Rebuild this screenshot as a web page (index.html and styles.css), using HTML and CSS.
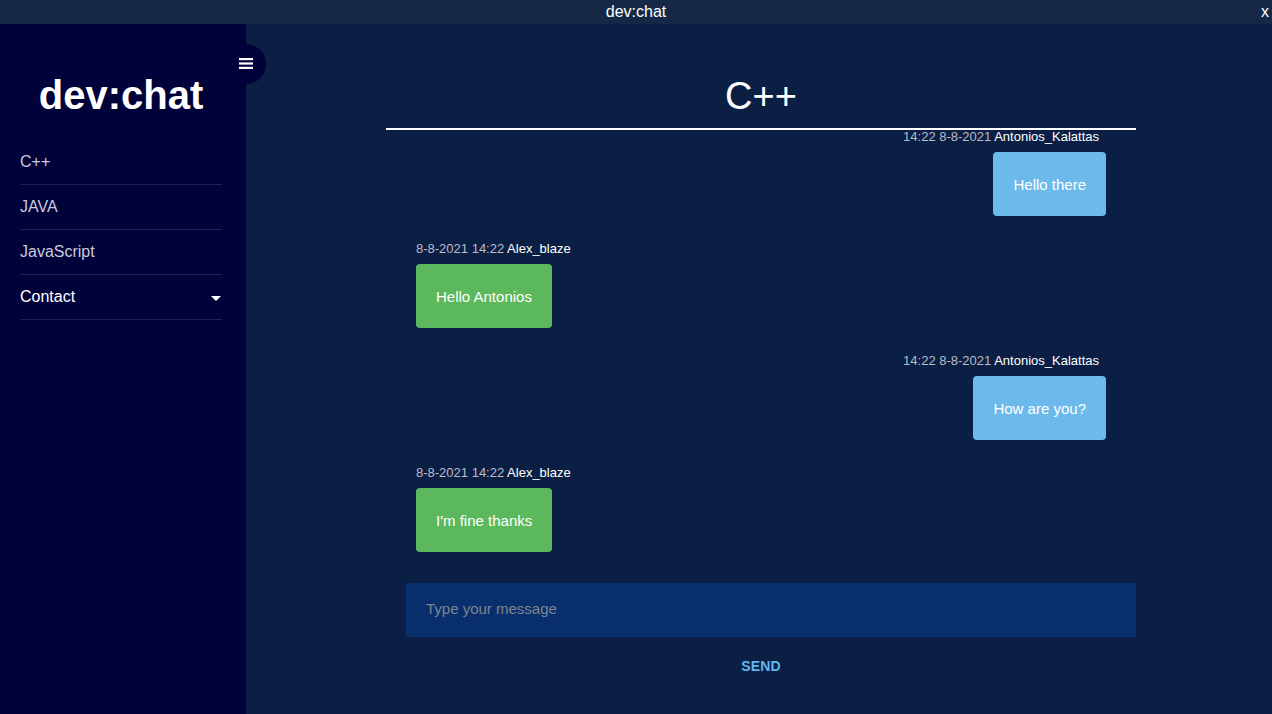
FILE: index.html
```html
<!DOCTYPE html>
<html lang="en">
<head>
<meta charset="utf-8">
<title>dev:chat</title>
<link rel="stylesheet" href="styles.css">
</head>
<body>
<div class="app">
  <header class="titlebar">
    <span class="titlebar-name">dev:chat</span>
    <span class="titlebar-close">x</span>
  </header>
  <div class="layout">
    <aside class="sidebar">
      <button class="toggle" aria-label="menu">
        <svg width="14" height="11" viewBox="0 0 14 11"><rect x="0" y="0" width="14" height="2.2" fill="#fff"/><rect x="0" y="4.4" width="14" height="2.2" fill="#fff"/><rect x="0" y="8.8" width="14" height="2.2" fill="#fff"/></svg>
      </button>
      <h1 class="brand">dev:chat</h1>
      <nav class="nav">
        <a class="nav-item">C++</a>
        <a class="nav-item">JAVA</a>
        <a class="nav-item">JavaScript</a>
        <a class="nav-item nav-item-active">Contact<span class="caret"></span></a>
      </nav>
    </aside>
    <main class="main">
      <div class="chat">
        <h2 class="room-title">C++</h2>
        <div class="messages">
          <div class="msg msg-out">
            <div class="meta"><span class="time">14:22 8-8-2021</span> <span class="user">Antonios_Kalattas</span></div>
            <div class="bubble">Hello there</div>
          </div>
          <div class="msg msg-in">
            <div class="meta"><span class="time">8-8-2021 14:22</span> <span class="user">Alex_blaze</span></div>
            <div class="bubble">Hello Antonios</div>
          </div>
          <div class="msg msg-out">
            <div class="meta"><span class="time">14:22 8-8-2021</span> <span class="user">Antonios_Kalattas</span></div>
            <div class="bubble">How are you?</div>
          </div>
          <div class="msg msg-in">
            <div class="meta"><span class="time">8-8-2021 14:22</span> <span class="user">Alex_blaze</span></div>
            <div class="bubble">I'm fine thanks</div>
          </div>
        </div>
        <div class="composer">
          <input class="composer-input" type="text" placeholder="Type your message">
        </div>
        <div class="send-row">
          <button class="send">SEND</button>
        </div>
      </div>
    </main>
  </div>
</div>
</body>
</html>
```

FILE: styles.css
```css
* { box-sizing: border-box; }
html, body {
  margin: 0;
  padding: 0;
  height: 100%;
  font-family: "Liberation Sans", Arial, sans-serif;
  background: #0b1f45;
  overflow: hidden;
}
.app {
  display: flex;
  flex-direction: column;
  height: 714px;
}
.titlebar {
  height: 24px;
  flex: 0 0 24px;
  background: #152946;
  color: #fff;
  font-size: 16px;
  line-height: 24px;
  display: flex;
  justify-content: center;
  position: relative;
}
.titlebar-close {
  position: absolute;
  right: 3px;
  top: 0;
}
.layout {
  flex: 1;
  display: flex;
  min-height: 0;
}
.sidebar {
  width: 246px;
  flex: 0 0 246px;
  background: #01023a;
  position: relative;
  padding: 48px 24px 0 20px;
  z-index: 2;
}
.toggle {
  position: absolute;
  top: 20px;
  right: -20px;
  width: 40px;
  height: 40px;
  border-radius: 50%;
  border: none;
  background: #01023a;
  padding: 0;
  display: flex;
  align-items: center;
  justify-content: center;
}
.toggle svg { display: block; margin-top: -2px; }
.brand {
  margin: 0 0 22px;
  font-size: 40px;
  font-weight: bold;
  line-height: 46px;
  color: #fff;
  text-align: center;
}
.nav {
  display: flex;
  flex-direction: column;
}
.nav-item {
  height: 45px;
  display: flex;
  align-items: center;
  justify-content: space-between;
  font-size: 16px;
  color: #c9cbdc;
  border-bottom: 1px solid #1d2154;
}
.nav-item-active { color: #fff; }
.caret {
  width: 0;
  height: 0;
  border-left: 5px solid transparent;
  border-right: 5px solid transparent;
  border-top: 5px solid #fff;
  margin-right: 1px;
  margin-top: 2px;
}
.main {
  flex: 1;
  padding: 52px 136px 0 140px;
}
.chat {
  width: 750px;
  display: flex;
  flex-direction: column;
}
.room-title {
  margin: 0;
  font-size: 38px;
  font-weight: normal;
  line-height: 40px;
  color: #fff;
  text-align: center;
  padding-bottom: 12px;
  border-bottom: 2px solid #fff;
}
.messages {
  display: flex;
  flex-direction: column;
  gap: 25px;
  padding: 0 30px 0 30px;
  margin-top: -1px;
}
.msg {
  display: flex;
  flex-direction: column;
}
.msg-out { align-items: flex-end; }
.msg-in { align-items: flex-start; }
.meta {
  font-size: 13px;
  line-height: 15px;
  margin-bottom: 8px;
}
.msg-out .meta { padding-right: 7px; }
.time { color: #b9bcc6; }
.user { color: #fff; }
.bubble {
  font-size: 15px;
  line-height: 24px;
  padding: 21px 20px 19px;
  border-radius: 4px;
  color: #fff;
}
.msg-out .bubble { background: #6cbaec; }
.msg-in .bubble { background: #5cb85c; }
.composer {
  margin: 31px 0 0 20px;
}
.composer-input {
  display: block;
  width: 100%;
  height: 54px;
  border: none;
  outline: none;
  background: #082f6b;
  color: #fff;
  font-family: "Liberation Sans", Arial, sans-serif;
  font-size: 15px;
  padding: 0 20px 4px;
}
.composer-input::placeholder { color: #7d8390; }
.send-row {
  display: flex;
  justify-content: center;
  margin-top: 11px;
}
.send {
  background: none;
  border: none;
  height: 36px;
  padding: 0 16px;
  font-family: "Liberation Sans", Arial, sans-serif;
  font-size: 14px;
  font-weight: bold;
  color: #62b5ee;
  letter-spacing: 0.2px;
}
```
